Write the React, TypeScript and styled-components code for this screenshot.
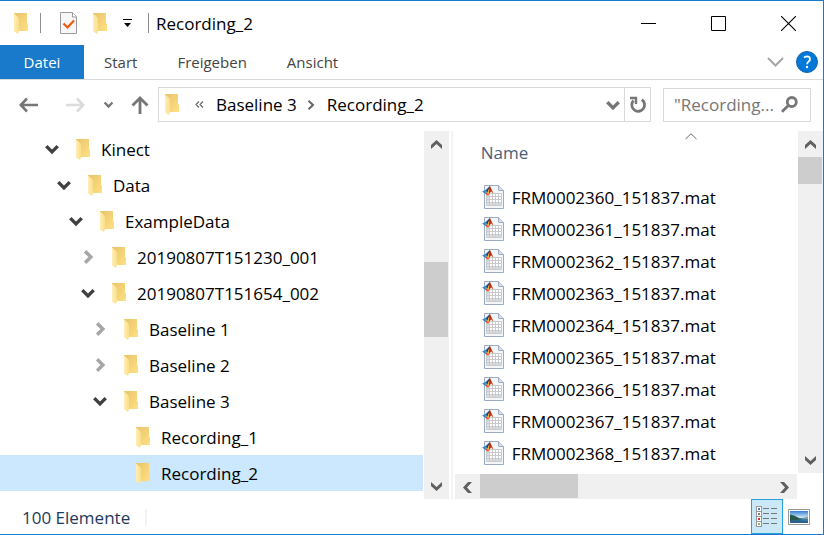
import React from "react";
import styled, { createGlobalStyle } from "styled-components";

const GlobalStyle = createGlobalStyle`
  * { box-sizing: border-box; }
  body {
    margin: 0;
    background: #fff;
    font-family: "Open Sans", "Noto Sans", sans-serif;
    font-size: 17px;
    color: #000;
  }
  button, input { font: inherit; color: inherit; }
  svg { display: block; flex: none; }
`;

const Window = styled.div`
  display: flex;
  flex-direction: column;
  height: 100vh;
  border: solid #1979ca;
  border-width: 1px 1px 1px 0;
  overflow: hidden;
`;

const PlainButton = styled.button`
  display: flex;
  align-items: center;
  justify-content: center;
  padding: 0;
  border: 0;
  background: none;
`;

const TitleBar = styled.header`
  display: flex;
  align-items: center;
  height: 44px;
  padding-left: 14px;
`;

const Divider = styled.span<{ $left: number; $right: number }>`
  width: 1px;
  height: 20px;
  margin: 0 ${(p) => p.$right}px 0 ${(p) => p.$left}px;
  background: #8c8c8c;
`;

const QuickButton = styled(PlainButton)<{ $gap: number }>`
  margin-right: ${(p) => p.$gap}px;
`;

const Title = styled.h1`
  flex: 1;
  margin: 0;
  font-size: 17px;
  font-weight: 400;
`;

const CaptionButton = styled(PlainButton)`
  width: 70px;
  height: 44px;
`;

const Ribbon = styled.nav`
  display: flex;
  height: 35px;
  border-bottom: 1px solid #d9dadb;
  font-size: 15px;
  color: #444;
`;

const FileTab = styled(PlainButton)`
  width: 84px;
  background: #1979ca;
  color: #fff;
`;

const Tab = styled(PlainButton)`
  padding: 0 20px;
`;

const RibbonTools = styled.div`
  display: flex;
  align-items: center;
  gap: 12px;
  margin-left: auto;
  padding-right: 5px;
`;

const NavBar = styled.div`
  display: flex;
  align-items: center;
  height: 51px;
  padding: 0 12px 2px 19px;
  color: #767676;
`;

const NavButton = styled(PlainButton)<{ $gap: number }>`
  margin-right: ${(p) => p.$gap}px;
`;

const AddressBox = styled.div`
  display: flex;
  align-items: center;
  flex: 1;
  height: 35px;
  border: 1px solid #d9d9d9;
  padding-left: 6px;
  color: #000;
`;

const Overflow = styled(PlainButton)`
  width: 12px;
  margin: 0 11px 0 14px;
  color: #666;
`;

const Crumb = styled(PlainButton)`
  white-space: nowrap;
`;

const CrumbArrow = styled.span`
  margin: 0 12px 0 10px;
`;

const AddressTools = styled.div`
  display: flex;
  align-self: stretch;
  margin-left: auto;
`;

const DropButton = styled(PlainButton)`
  width: 22px;
  color: #767676;
`;

const RefreshButton = styled(PlainButton)`
  width: 26px;
  border-left: 1px solid #d9d9d9;
`;

const SearchBox = styled.label`
  display: flex;
  align-items: center;
  width: 148px;
  height: 34px;
  margin-left: 12px;
  padding: 0 12px 0 10px;
  border: 1px solid #d9d9d9;
`;

const SearchInput = styled.input`
  flex: 1;
  min-width: 0;
  padding: 0;
  border: 0;
  outline: 0;
  background: none;
  &::placeholder { color: #767676; opacity: 1; }
`;

const Main = styled.main`
  display: flex;
  flex: 1;
  min-height: 0;
`;

const NavPane = styled.aside`
  display: flex;
  flex: 0 0 55%;
  padding-right: 2px;
  border-right: 2px solid #f4f4f4;
`;

const Tree = styled.ul`
  flex: 1;
  margin: 0;
  padding: 0 1px 0 0;
  list-style: none;
  overflow: hidden;
`;

const TreeRow = styled.li<{ $level: number; $selected: boolean }>`
  display: flex;
  align-items: center;
  height: 36px;
  padding-left: ${(p) => 44 + p.$level * 12}px;
  background: ${(p) => (p.$selected ? "#cce8ff" : "transparent")};
`;

const Toggle = styled(PlainButton)<{ $open: boolean }>`
  width: 16px;
  height: 16px;
  margin-right: 16px;
  color: ${(p) => (p.$open ? "#404040" : "#a6a6a6")};
`;

const TreeLabel = styled(PlainButton)`
  gap: 11px;
  white-space: nowrap;
`;

const Scrollbar = styled.div<{ $horizontal?: boolean }>`
  display: flex;
  flex: none;
  flex-direction: ${(p) => (p.$horizontal ? "row" : "column")};
  ${(p) => (p.$horizontal ? "height: 25px;" : "width: 25px;")}
  background: #f0f0f0;
  color: #606060;
`;

const ScrollButton = styled(PlainButton)`
  flex: none;
  width: 25px;
  height: 26px;
`;

const Track = styled.div<{ $grow: number }>`
  flex: ${(p) => p.$grow} 0 0;
`;

const Thumb = styled(Track)`
  background: #cdcdcd;
  margin: 0 1px 1px 0;
`;

const FilePane = styled.section`
  display: flex;
  flex-direction: column;
  flex: 1;
  min-width: 0;
  margin-left: 2px;
`;

const FileArea = styled.div`
  display: flex;
  flex: 1;
  min-height: 0;
`;

const FileScroller = styled.div`
  flex: 1;
  overflow: hidden;
`;

const FileTable = styled.table`
  width: 100%;
  border-collapse: collapse;
`;

const HeadCell = styled.th`
  height: 50px;
  padding: 0 0 8px 26px;
  font-weight: 400;
  text-align: left;
  color: #4c607a;
`;

const HeadContent = styled.div`
  display: grid;
  grid-template-columns: 1fr auto 1fr;
  align-items: start;
`;

const SortMark = styled.span`
  margin: -8px 0 0 104px;
`;

const FileCell = styled.td`
  height: 32px;
  padding: 0 0 0 27px;
`;

const FileName = styled.span`
  display: flex;
  align-items: center;
  gap: 8px;
  white-space: nowrap;
`;

const HorizontalRow = styled.div`
  padding-top: 1px;
  padding-right: 26px;
`;

const StatusBar = styled.footer`
  display: flex;
  align-items: center;
  flex: none;
  height: 35px;
  padding: 0 8px 0 22px;
  color: #1e395b;
`;

const StatusText = styled.span`
  margin: 1px auto 0 0;
  padding-right: 15px;
  border-right: 2px solid #f3f3f3;
  line-height: 17px;
`;

const ViewButton = styled(PlainButton)<{ $active?: boolean }>`
  width: 32px;
  height: 35px;
  border: 1px solid ${(p) => (p.$active ? "#26a0da" : "transparent")};
  background: ${(p) => (p.$active ? "#cbe8f6" : "transparent")};
`;

const FolderIcon = () => (
  <svg width="14" height="21" viewBox="0 0 14 21" aria-hidden="true">
    <defs>
      <linearGradient id="folderBack" x1="0" x2="1" y1="0" y2="1">
        <stop offset="0" stopColor="#e9c469" />
        <stop offset="1" stopColor="#ffe084" />
      </linearGradient>
      <linearGradient id="folderFront" x1="0" x2="1">
        <stop offset="0" stopColor="#ffeeb5" />
        <stop offset="1" stopColor="#fbdf8b" />
      </linearGradient>
    </defs>
    <path d="M0 0H13V10L14 11V18H0Z" fill="url(#folderBack)" />
    <path d="M0 0.5L4 4Q5 5 5 7V18L4 21L0 18.5Z" fill="url(#folderFront)" />
  </svg>
);

const Chevron = ({ dir, size = 14, weight = 3 }: { dir: "down" | "right"; size?: number; weight?: number }) => (
  <svg width={size} height={size} viewBox="0 0 14 14" fill="none" stroke="currentColor" strokeWidth={weight} aria-hidden="true">
    <path d={dir === "down" ? "M2 4.5L7 9.5L12 4.5" : "M4.5 2L9.5 7L4.5 12"} />
  </svg>
);

const ScrollArrow = ({ dir }: { dir: "up" | "down" | "left" | "right" }) => {
  const paths = {
    up: "M0 9V5L5.5 0L11 5V9L5.5 4Z",
    down: "M0 0V4L5.5 9L11 4V0L5.5 5Z",
    left: "M9 0H5L0 5.5L5 11H9L4 5.5Z",
    right: "M0 0H4L9 5.5L4 11H0L5 5.5Z",
  };
  const upright = dir === "up" || dir === "down";
  return (
    <svg width={upright ? 11 : 9} height={upright ? 9 : 11} viewBox={upright ? "0 0 11 9" : "0 0 9 11"} fill="currentColor" aria-hidden="true">
      <path d={paths[dir]} />
    </svg>
  );
};

const PropertiesIcon = () => (
  <svg width="18" height="22" viewBox="0 0 18 22" aria-hidden="true">
    <path d="M.5 .5H12.5L16.5 4.5V21.5H.5Z" fill="#f7f7f9" stroke="#9b9b9b" />
    <path d="M12.5 .5V5H16.5" fill="#fff" stroke="#9b9b9b" />
    <path d="M3.5 11.5L7.5 15.5L14 8.5" fill="none" stroke="#f2580c" strokeWidth="2.2" />
  </svg>
);

const CustomizeIcon = () => (
  <svg width="9" height="8" viewBox="0 0 9 8" aria-hidden="true">
    <path d="M0 0H9V1H0ZM1 4H8L4.5 8Z" />
  </svg>
);

const BackIcon = () => (
  <svg width="20" height="16" viewBox="0 0 20 16" fill="none" stroke="currentColor" strokeWidth="2.6" aria-hidden="true">
    <path d="M19 8H2M8 1.5L1.8 8L8 14.5" />
  </svg>
);

const ForwardIcon = () => (
  <svg width="20" height="16" viewBox="0 0 20 16" fill="none" stroke="#dcdcdc" strokeWidth="2.6" aria-hidden="true">
    <path d="M1 8H18M12 1.5L18.2 8L12 14.5" />
  </svg>
);

const UpIcon = () => (
  <svg width="18" height="18" viewBox="0 0 18 18" fill="none" stroke="currentColor" strokeWidth="2.8" aria-hidden="true">
    <path d="M9 18V2M1.5 9.5L9 2L16.5 9.5" />
  </svg>
);

const RefreshIcon = () => (
  <svg width="18" height="18" viewBox="0 0 18 18" fill="none" stroke="#767676" aria-hidden="true">
    <path d="M4.5 4.5A6.4 6.4 0 1 0 12.8 3.6" strokeWidth="2.8" />
    <path d="M1 2H7V8" strokeWidth="2.4" />
  </svg>
);

const SearchIcon = () => (
  <svg width="17" height="17" viewBox="0 0 17 17" fill="none" stroke="#767676" strokeWidth="2.8" aria-hidden="true">
    <circle cx="10.8" cy="6" r="4.5" />
    <path d="M7.6 9.2L1 15.8" />
  </svg>
);

const HelpIcon = () => (
  <svg width="22" height="22" viewBox="0 0 22 22" aria-hidden="true">
    <circle cx="11" cy="11" r="10.5" fill="#0078d7" stroke="#1765ad" />
    <path d="M7.9 6.6Q9.2 5.3 11 5.3Q14 5.4 14 8Q14 9.6 12.4 10.7Q11.1 11.6 11.1 13.2" fill="none" stroke="#fff" strokeWidth="1.8" />
    <circle cx="11" cy="16" r="1.2" fill="#fff" />
  </svg>
);

const MatFileIcon = () => (
  <svg width="22" height="24" viewBox="0 0 22 24" aria-hidden="true">
    <path d="M2.5 .5H16.5L21.5 5.5V23.5H2.5Z" fill="#f3f6fa" stroke="#9dadc1" />
    <path d="M16.5 .5V5.5H21.5" fill="#d5e1ee" stroke="#9dadc1" />
    <path d="M5 8H19V20H5Z" fill="#fff" />
    <path d="M5 17H19V20H5ZM5 8H8V20H5Z" fill="#dedfe1" />
    <path d="M4.5 8.500H19.5V20.5H4.5ZM7.5 8V21M10.5 8V21M13.5 8V21M16.5 8V21M4 11.5H20M4 14.5H20M4 17.5H20" fill="none" stroke="#c8cacd" />
    <path d="M0 6.500L4 4.500L6 6L3.500 9Z" fill="#3b94d1" />
    <path d="M4 5L7.800 1L8 5L5.500 8Z" fill="#243b70" />
    <path d="M3.500 9L6.200 6L8 1Q9.500 4 11.500 8.500L9 6.500L6 10.500Z" fill="#d83b18" />
    <path d="M7.500 2.500L8.500 6L6 9.800L5 8.500Z" fill="#f8b33b" />
    <path d="M7.500 1Q9 4 8.500 6.800L7 8Q7.500 5 7.500 1Z" fill="#86170e" />
  </svg>
);

const DetailsIcon = () => (
  <svg width="22" height="22" viewBox="0 0 22 22" shapeRendering="crispEdges" aria-hidden="true">
    {["#4582c4", "#92795e", "#dc2f2a", "#8fb572"].map((color, i) => (
      <g key={color} transform={`translate(0 ${i * 5})`}>
        <path d="M.5 .5H5.500V5.500H.5Z" fill="#fff" stroke="#999" />
        <path d="M2 2H4V4H2Z" fill={color} />
        <path d="M7 2H13V3H7ZM15 2H21V3H15Z" fill="#777" />
      </g>
    ))}
  </svg>
);

const PictureIcon = () => (
  <svg width="22" height="16" viewBox="0 0 22 16" aria-hidden="true">
    <defs>
      <linearGradient id="sky" x2="0" y2="1">
        <stop offset="0" stopColor="#3581d5" />
        <stop offset="1" stopColor="#d9effb" />
      </linearGradient>
    </defs>
    <path d="M.5 .5H21.500V15.500H.5Z" fill="#fff" stroke="#999" />
    <path d="M2 2H20V9H2Z" fill="url(#sky)" />
    <path d="M2 9H20V14H2Z" fill="#397fae" />
    <path d="M2 5.500L6 6.500L11 9L15 10L9 11L2 12Z" fill="#28594b" />
    <path d="M12 9.500L20 7.500V10Z" fill="#8ba19a" />
    <path d="M2 12.500L10 11L20 12V14H2Z" fill="#2a638a" />
  </svg>
);

type Node = { name: string; level: number; open?: boolean };

const nodes: Node[] = [
  { name: "Kinect", level: 0, open: true },
  { name: "Data", level: 1, open: true },
  { name: "ExampleData", level: 2, open: true },
  { name: "20190807T151230_001", level: 3, open: false },
  { name: "20190807T151654_002", level: 3, open: true },
  { name: "Baseline 1", level: 4, open: false },
  { name: "Baseline 2", level: 4, open: false },
  { name: "Baseline 3", level: 4, open: true },
  { name: "Recording_1", level: 5 },
  { name: "Recording_2", level: 5 },
];

const LeafSpace = styled.span`
  width: 32px;
`;

const files = Array.from({ length: 9 }, (_, i) => `FRM000${2360 + i}_151837.mat`);

export default function App() {
  const [selected, setSelected] = React.useState("Recording_2");
  return (
    <>
      <GlobalStyle />
      <Window>
        <TitleBar>
          <FolderIcon />
          <Divider $left={12} $right={19} />
          <QuickButton $gap={15} aria-label="Eigenschaften"><PropertiesIcon /></QuickButton>
          <QuickButton $gap={16} aria-label="Neuer Ordner"><FolderIcon /></QuickButton>
          <QuickButton $gap={0} aria-label="Symbolleiste anpassen"><CustomizeIcon /></QuickButton>
          <Divider $left={16} $right={7} />
          <Title>Recording_2</Title>
          <CaptionButton aria-label="Minimieren">
            <svg width="15" height="15" viewBox="0 0 15 15"><path d="M0 7H15V8H0Z" /></svg>
          </CaptionButton>
          <CaptionButton aria-label="Maximieren">
            <svg width="15" height="15" viewBox="0 0 15 15"><path d="M.5 .5H14.500V14.500H.5Z" fill="none" stroke="#000" /></svg>
          </CaptionButton>
          <CaptionButton aria-label="Schließen">
            <svg width="15" height="15" viewBox="0 0 15 15"><path d="M0 0L15 15M15 0L0 15" stroke="#000" strokeWidth="1.100" /></svg>
          </CaptionButton>
        </TitleBar>

        <Ribbon>
          <FileTab>Datei</FileTab>
          <Tab>Start</Tab>
          <Tab>Freigeben</Tab>
          <Tab>Ansicht</Tab>
          <RibbonTools>
            <PlainButton aria-label="Menüband erweitern">
              <svg width="17" height="10" viewBox="0 0 17 10" fill="none" stroke="#a6a6a6" strokeWidth="2"><path d="M1 1L8.500 8.500L16 1" /></svg>
            </PlainButton>
            <PlainButton aria-label="Hilfe"><HelpIcon /></PlainButton>
          </RibbonTools>
        </Ribbon>

        <NavBar>
          <NavButton $gap={26} aria-label="Zurück"><BackIcon /></NavButton>
          <NavButton $gap={18} aria-label="Vorwärts"><ForwardIcon /></NavButton>
          <NavButton $gap={17} aria-label="Verlauf"><Chevron dir="down" size={11} weight={3} /></NavButton>
          <NavButton $gap={9} aria-label="Nach oben"><UpIcon /></NavButton>
          <AddressBox>
            <FolderIcon />
            <Overflow aria-label="Übergeordnete Ordner">
              <svg width="9" height="7" viewBox="0 0 9 7" fill="none" stroke="currentColor" strokeWidth="1.200"><path d="M4 .5L1 3.500L4 6.500M8 .5L5 3.500L8 6.500" /></svg>
            </Overflow>
            <Crumb>Baseline 3</Crumb>
            <CrumbArrow>
              <svg width="8" height="10" viewBox="0 0 8 10" fill="none" stroke="#666" strokeWidth="2"><path d="M1.500 .8L6 5L1.500 9.200" /></svg>
            </CrumbArrow>
            <Crumb>Recording_2</Crumb>
            <AddressTools>
              <DropButton aria-label="Vorherige Orte"><Chevron dir="down" size={16} /></DropButton>
              <RefreshButton aria-label="Aktualisieren"><RefreshIcon /></RefreshButton>
            </AddressTools>
          </AddressBox>
          <SearchBox>
            <SearchInput type="text" aria-label="Suchen" placeholder={'"Recording...'} />
            <SearchIcon />
          </SearchBox>
        </NavBar>

        <Main>
          <NavPane>
            <Tree>
              {nodes.map((node) => (
                <TreeRow key={node.name} $level={node.level} $selected={node.name === selected}>
                  {node.open === undefined ? (
                    <LeafSpace />
                  ) : (
                    <Toggle $open={node.open} aria-label={node.name} aria-expanded={node.open}>
                      <Chevron dir={node.open ? "down" : "right"} size={16} />
                    </Toggle>
                  )}
                  <TreeLabel onClick={() => setSelected(node.name)}>
                    <FolderIcon />
                    {node.name}
                  </TreeLabel>
                </TreeRow>
              ))}
            </Tree>
            <Scrollbar>
              <ScrollButton aria-label="Nach oben scrollen"><ScrollArrow dir="up" /></ScrollButton>
              <Track $grow={105} />
              <Thumb $grow={75} />
              <Track $grow={135} />
              <ScrollButton aria-label="Nach unten scrollen"><ScrollArrow dir="down" /></ScrollButton>
            </Scrollbar>
          </NavPane>

          <FilePane>
            <FileArea>
              <FileScroller>
                <FileTable>
                  <thead>
                    <tr>
                      <HeadCell scope="col" aria-sort="ascending">
                        <HeadContent>
                          <span>Name</span>
                          <SortMark>
                            <svg width="12" height="7" viewBox="0 0 12 7" fill="none" stroke="#666"><path d="M.5 6L6 .8L11.500 6" /></svg>
                          </SortMark>
                        </HeadContent>
                      </HeadCell>
                    </tr>
                  </thead>
                  <tbody>
                    {files.map((file) => (
                      <tr key={file}>
                        <FileCell>
                          <FileName><MatFileIcon />{file}</FileName>
                        </FileCell>
                      </tr>
                    ))}
                  </tbody>
                </FileTable>
              </FileScroller>
              <Scrollbar>
                <ScrollButton aria-label="Liste nach oben"><ScrollArrow dir="up" /></ScrollButton>
                <Thumb $grow={27} />
                <Track $grow={263} />
                <ScrollButton aria-label="Liste nach unten"><ScrollArrow dir="down" /></ScrollButton>
              </Scrollbar>
            </FileArea>
            <HorizontalRow>
              <Scrollbar $horizontal>
                <ScrollButton aria-label="Liste nach links"><ScrollArrow dir="left" /></ScrollButton>
                <Thumb $grow={98} />
                <Track $grow={192} />
                <ScrollButton aria-label="Liste nach rechts"><ScrollArrow dir="right" /></ScrollButton>
              </Scrollbar>
            </HorizontalRow>
          </FilePane>
        </Main>

        <StatusBar>
          <StatusText>100 Elemente</StatusText>
          <ViewButton $active aria-label="Details" aria-pressed="true"><DetailsIcon /></ViewButton>
          <ViewButton aria-label="Große Symbole" aria-pressed="false"><PictureIcon /></ViewButton>
        </StatusBar>
      </Window>
    </>
  );
}
